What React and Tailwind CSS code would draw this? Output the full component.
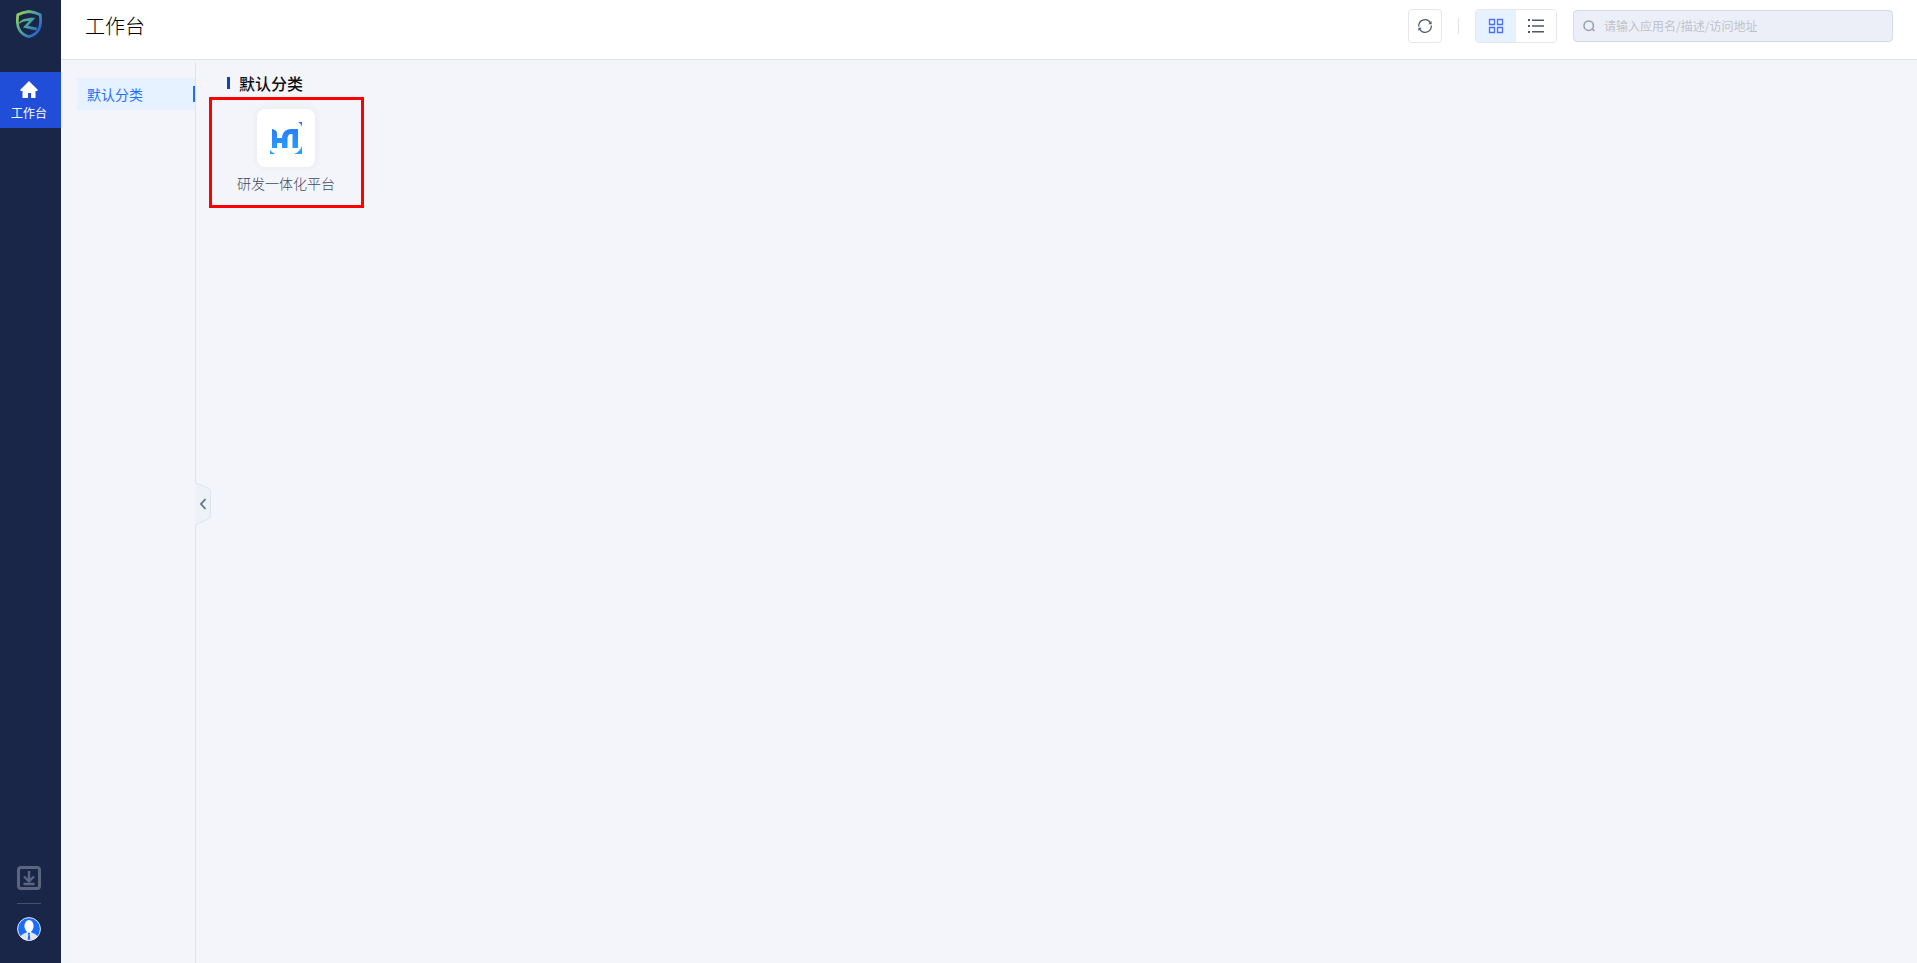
import { useState } from "react";

const apps = [{ id: 1, name: "研发一体化平台" }];

function ShieldLogo() {
  return (
    <svg width="26" height="28" viewBox="0 0 26 28" fill="none" aria-hidden="true">
      <defs>
        <linearGradient id="shield" x1="2" y1="4" x2="23" y2="20" gradientUnits="userSpaceOnUse">
          <stop offset="0" stopColor="#8fcf5a" />
          <stop offset="0.5" stopColor="#4ba3a0" />
          <stop offset="1" stopColor="#2c66c8" />
        </linearGradient>
      </defs>
      <path
        d="M13 1.500C9.600 1.800 5.600 2.800 1.800 4.800C1 10.600 1 16.500 3.800 20.500C6.200 23.900 9.800 25.800 13 26.600C16.200 25.800 19.800 23.900 22.200 20.500C25 16.500 25 10.600 24.200 4.800C20.400 2.800 16.400 1.800 13 1.500Z"
        stroke="url(#shield)"
        strokeWidth="2.800"
      />
      <path d="M2 14.500C4.500 9.500 10 7.500 19.500 7.800L12 15.800L21.500 17.800L20 20.500L7 17.500L13 11C8.500 10.900 5 12 2 14.500Z" fill="url(#shield)" />
    </svg>
  );
}

function HomeIcon() {
  return (
    <svg width="18" height="17" viewBox="0 0 18 17" fill="#fff" aria-hidden="true">
      <path d="M9 0L18 9L17 10H15.500V17H11V12H8V17H2.500V10H1L0 9Z" />
    </svg>
  );
}

function DownloadIcon() {
  return (
    <svg width="24" height="24" viewBox="0 0 24 24" fill="none" stroke="#5b6580" aria-hidden="true">
      <rect x="1.500" y="1.500" width="21" height="21" rx="2.500" strokeWidth="3" />
      <path d="M12 5V14.500M7 10.500L12 15.300L17 10.500M6.500 18H17.500" strokeWidth="2.400" />
    </svg>
  );
}

function AvatarIcon() {
  return (
    <svg width="24" height="24" viewBox="0 0 24 24" aria-hidden="true">
      <defs>
        <clipPath id="avatar">
          <circle cx="12" cy="12" r="11.500" />
        </clipPath>
      </defs>
      <circle cx="12" cy="12" r="11.500" fill="#1b6dff" />
      <g clipPath="url(#avatar)">
        <path d="M3 20C4.500 17 8 16 10 15.200H14C16 16 19.500 17 21 20V24H3Z" fill="#dfe5f2" />
        <path d="M9.800 14H14.200V15.400L12 17L9.800 15.400Z" fill="#fff" />
        <path d="M10.800 15.800H13.200L12.700 17.600L13.500 24H10.500L11.300 17.600Z" fill="#1b6dff" />
        <ellipse cx="12" cy="9" rx="4.600" ry="6" fill="#fff" />
      </g>
      <circle cx="12" cy="12" r="11.400" fill="none" stroke="#e6ecf8" strokeWidth="1" />
    </svg>
  );
}

function RefreshIcon() {
  return (
    <svg width="16" height="16" viewBox="0 0 16 16" fill="none" stroke="#4e5b6e" strokeWidth="1.300" aria-hidden="true">
      <path d="M1.700 8.500V7.500A6.300 6.300 0 0 1 13.500 5M14.300 7.500V8.500A6.300 6.300 0 0 1 2.500 11" />
      <path d="M14.600 3V6.200H11.200ZM1.400 13V9.800H4.800Z" fill="#4e5b6e" stroke="none" />
    </svg>
  );
}

function GridIcon() {
  return (
    <svg width="16" height="16" viewBox="0 0 16 16" fill="none" stroke="#4c6fff" aria-hidden="true">
      <path d="M1.500 1.500H6.500V6.500H1.500ZM9.500 1.500H14.500V6.500H9.500ZM1.500 9.500H6.500V14.500H1.500ZM9.500 9.500H14.500V14.500H9.500Z" strokeWidth="1.300" />
    </svg>
  );
}

function ListIcon() {
  return (
    <svg width="16" height="14" viewBox="0 0 16 14" fill="#4e5969" aria-hidden="true">
      <path d="M0 0H2V2H0ZM4 0.500H16V2H4ZM0 6H2V8H0ZM4 6.200H16V7.700H4ZM0 12H2V14H0ZM4 12H16V13.500H4Z" />
    </svg>
  );
}

function SearchIcon() {
  return (
    <svg width="12" height="12" viewBox="0 0 12 12" fill="none" stroke="#969fae" strokeWidth="1.500" aria-hidden="true">
      <circle cx="5.700" cy="5.700" r="4.700" />
      <path d="M8.600 8.600L11.500 11" />
    </svg>
  );
}

function AppLogo() {
  return (
    <svg width="34" height="34" viewBox="0 0 34 34" aria-hidden="true">
      <defs>
        <linearGradient id="appLogo" x1="0" y1="0" x2="0" y2="34" gradientUnits="userSpaceOnUse">
          <stop offset="0" stopColor="#2a72ff" />
          <stop offset="1" stopColor="#26a5ff" />
        </linearGradient>
      </defs>
      <g fill="url(#appLogo)">
        <path d="M3 8C6 8.400 8 10 8 12.500V17H13C13.400 11.500 16.500 8 22 8H29V27H23.500V13H22C20 13 18.500 14.500 18.500 18V27H13V22H8V27H3Z" />
        <path d="M29 1H33V6C32.500 4 31.500 2.500 29 1Z" />
        <path d="M1 29C2.500 30.800 4 32 6.500 33H1Z" />
        <path d="M33 25V33H25C29 31.500 31.500 29 33 25Z" />
      </g>
    </svg>
  );
}

export default function App() {
  const [view, setView] = useState("grid");
  const [keyword, setKeyword] = useState("");

  return (
    <div className="flex h-screen bg-[#f3f5fa] font-['Noto_Sans_CJK_SC',sans-serif]">
      <aside className="flex w-[61px] shrink-0 flex-col bg-[#1a2647]">
        <div className="flex h-[72px] justify-center pt-[10px] pr-[3px]">
          <ShieldLogo />
        </div>
        <a href="#workbench" className="flex h-14 flex-col items-center gap-[5px] bg-[#204ed9] pt-[9px] pr-[3px] text-xs leading-5 text-white">
          <HomeIcon />
          工作台
        </a>
        <div className="mt-auto flex flex-col items-center pr-[3px] pb-[22px]">
          <button type="button" aria-label="下载">
            <DownloadIcon />
          </button>
          <div className="my-[13px] h-px w-6 bg-[#46506c]"></div>
          <button type="button" aria-label="个人中心">
            <AvatarIcon />
          </button>
        </div>
      </aside>

      <div className="flex min-w-0 flex-1 flex-col">
        <header className="flex h-[60px] shrink-0 items-center justify-between border-b border-[#dfe2ea] bg-white pr-6 pb-[7px] pl-6">
          <h1 className="text-xl font-light text-black">工作台</h1>
          <div className="flex items-center gap-4">
            <button type="button" aria-label="刷新" className="flex size-[34px] items-center justify-center rounded border border-[#e5e6eb] bg-white">
              <RefreshIcon />
            </button>
            <div className="h-4 w-px bg-[#e0e2e8]"></div>
            <div className="flex h-[34px] w-[82px] overflow-hidden rounded border border-[#e5e6eb]">
              <button
                type="button"
                aria-label="卡片视图"
                onClick={() => setView("grid")}
                className={`flex flex-1 items-center justify-center ${view === "grid" ? "bg-[#e6f2ff]" : "bg-white"}`}
              >
                <GridIcon />
              </button>
              <button
                type="button"
                aria-label="列表视图"
                onClick={() => setView("list")}
                className={`flex flex-1 items-center justify-center ${view === "list" ? "bg-[#e6f2ff]" : "bg-white"}`}
              >
                <ListIcon />
              </button>
            </div>
            <label className="flex h-8 w-80 items-center gap-[9px] rounded border border-[#d5d9e5] bg-[#eceff7] px-[9px]">
              <SearchIcon />
              <input
                type="text"
                aria-label="搜索应用"
                value={keyword}
                onChange={(e) => setKeyword(e.target.value)}
                placeholder="请输入应用名/描述/访问地址"
                className="min-w-0 flex-1 bg-transparent text-xs text-[#4e5969] outline-none placeholder:text-[#bfc3cb]"
              />
            </label>
          </div>
        </header>

        <div className="flex min-h-0 flex-1 pt-[2px]">
          <nav className="relative w-[135px] shrink-0 border-r border-[#e0e3ea] pt-4 pl-4">
            <a href="#default" className="flex h-8 items-center justify-between bg-[#e6f2ff] pl-[10px] text-sm text-[#1e6fff]">
              默认分类
              <span className="h-4 w-[2px] bg-[#1e6fff]"></span>
            </a>
            <button type="button" aria-label="收起分类" className="absolute top-[420px] left-full">
              <svg width="16" height="44" viewBox="0 0 16 44" fill="none" aria-hidden="true">
                <path d="M0 0.500L15.500 7V36L0 43Z" fill="#edf1f8" />
                <path d="M0 0.500L13 6Q15.500 7 15.500 9V34Q15.500 36 13 37L0 43" stroke="#e0e3ea" />
                <path d="M10.500 17L6 22L10.500 27" stroke="#667085" strokeWidth="1.800" />
              </svg>
            </button>
          </nav>

          <main className="flex-1 overflow-auto pt-[9px] pl-[13px]">
            <h2 className="flex h-[26px] items-center gap-[9px] pb-[2px] pl-[18px] text-base font-medium text-[#0c0f14]">
              <span className="h-3 w-[3px] bg-[#1541b8]"></span>
              默认分类
            </h2>
            <div className="flex flex-wrap">
              {apps.map((app) => (
                <a key={app.id} href="#app" className="flex h-[111px] w-[155px] flex-col items-center gap-[6px] border-3 border-[#ff0000] pt-[9px] pr-px text-sm font-light text-[#3f4a61]">
                  <span className="flex size-[58px] items-center justify-center rounded-lg bg-white shadow-[0_0_8px_rgba(0,0,0,0.06)]">
                    <AppLogo />
                  </span>
                  {app.name}
                </a>
              ))}
            </div>
          </main>
        </div>
      </div>
    </div>
  );
}
